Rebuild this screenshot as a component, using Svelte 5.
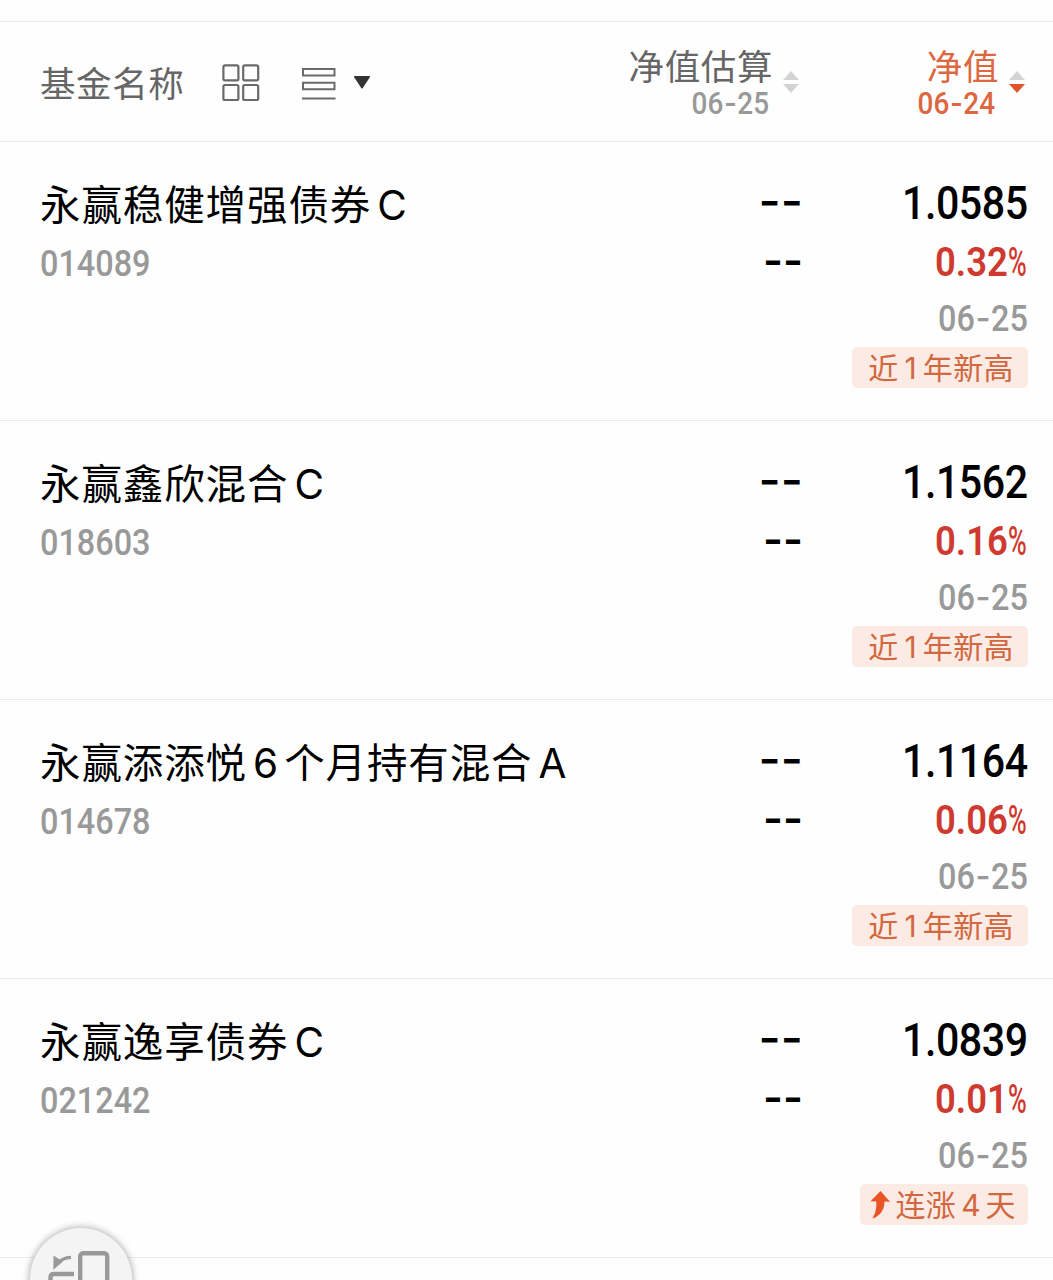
<script lang="ts">
  type Fund = {
    name: string;
    code: string;
    value: string;
    change: string;
    date: string;
    tag: string;
    rising?: boolean;
  };

  const funds: Fund[] = [
    { name: '永赢稳健增强债券C', code: '014089', value: '1.0585', change: '0.32', date: '06-25', tag: '近1年新高' },
    { name: '永赢鑫欣混合C', code: '018603', value: '1.1562', change: '0.16', date: '06-25', tag: '近1年新高' },
    { name: '永赢添添悦6个月持有混合A', code: '014678', value: '1.1164', change: '0.06', date: '06-25', tag: '近1年新高' },
    { name: '永赢逸享债券C', code: '021242', value: '1.0839', change: '0.01', date: '06-25', tag: '连涨4天', rising: true }
  ];

  // split mixed text so latin letters and digits get their own spacing
  function split(text: string) {
    return text.split(/([A-Z0-9]+)/).filter(Boolean);
  }

  function isLatin(part: string) {
    return /^[A-Z0-9]/.test(part);
  }
</script>

{#snippet day(text: string)}
  {@const [month, date] = text.split('-')}
  <span class="num">{month}<span class="hyphen">-</span>{date}</span>
{/snippet}

{#snippet mixed(text: string)}
  {#each split(text) as part}{#if isLatin(part)}<span class="latin">{part}</span>{:else}{part}{/if}{/each}
{/snippet}

{#snippet sorter(active: boolean)}
  <svg class="sorter" width="18" height="24" viewBox="0 0 18 24">
    <path d="M9 1 17 10H1z" fill="#d3d3d3" />
    <path d="M1 14h16L9 23z" fill={active ? '#e2552b' : '#d3d3d3'} />
  </svg>
{/snippet}

<div class="screen">
  <header>
    <div class="title">
      <span class="label">基金名称</span>
      <svg class="grid-icon" width="38" height="38" viewBox="0 0 38 38" fill="none" stroke="#6a6a6a" stroke-width="2.2">
        <rect x="1.4" y="1.4" width="15" height="15" rx="1.6" />
        <rect x="21.2" y="1.4" width="15" height="15" rx="1.6" />
        <rect x="1.4" y="21" width="15" height="15" rx="1.6" />
        <rect x="21.2" y="21" width="15" height="15" rx="1.6" />
      </svg>
      <svg class="list-icon" width="36" height="34" viewBox="0 0 36 34" fill="none" stroke="#6a6a6a" stroke-width="2">
        <path d="M2 2h31.500v6.500H2zM2 15.800h31.500v6.500H2zM1 31.500h33.500" />
      </svg>
      <svg width="18" height="15" viewBox="0 0 18 15">
        <path d="M1.6 1h14.8q1 .2.4 1.2L9.8 13q-.8 1-1.6 0L1.200 2.200Q.6 1.200 1.600 1z" fill="#333" />
      </svg>
    </div>
    <div class="column estimate">
      <div class="heading">
        <span class="label">净值估算</span>
        {@render day('06-25')}
      </div>
      {@render sorter(false)}
    </div>
    <div class="column net active">
      <div class="heading">
        <span class="label">净值</span>
        {@render day('06-24')}
      </div>
      {@render sorter(true)}
    </div>
  </header>

  {#each funds as fund}
    <div class="row">
      <div class="fund">
        <div class="name">{@render mixed(fund.name)}</div>
        <div class="code"><span class="num">{fund.code}</span></div>
      </div>
      <div class="empty">
        <div class="dash">--</div>
        <div class="dash small">--</div>
      </div>
      <div class="values">
        <div class="value"><span class="num">{fund.value}</span></div>
        <div class="change"><span class="num">{fund.change}</span><span class="percent">%</span></div>
        <div class="date">{@render day(fund.date)}</div>
        <div class="tag" class:rising={fund.rising}>
          {#if fund.rising}
            <svg width="20" height="28" viewBox="0 0 20 28">
              <path d="M10.500 0 20 10.800 14.500 10.400C14.400 18 11 24.500 2.300 27.600 5.800 22 6.600 17 6.300 10.400L.5 10.200z" fill="#ea5526" />
            </svg>
          {/if}
          <span class="tag-text">{@render mixed(fund.tag)}</span>
        </div>
      </div>
    </div>
  {/each}

  <div class="float">
    <svg width="66" height="60" viewBox="0 0 66 60" fill="none" stroke="#999" stroke-width="4.4">
      <rect x="32.200" y="4.200" width="27" height="48" rx="3" />
      <path d="M26 25H6q-3.500 0-3.500 3.500v22H26" />
      <path d="M23 8.300Q14 8.500 9.500 15" stroke-width="3.200" />
      <path d="M5.500 6.500 15 12.500 5.300 20.800z" fill="#999" stroke="none" />
    </svg>
  </div>
</div>

<style>
  :global(body) {
    background: #fefefe;
  }

  .screen {
    position: relative;
    box-sizing: border-box;
    width: 1053px;
    height: 1280px;
    padding-top: 21px;
    overflow: hidden;
    background: #fefefe;
    font-family: 'Noto Sans CJK SC', sans-serif;
    color: #000;
  }

  header {
    display: flex;
    box-sizing: border-box;
    height: 121px;
    padding: 1px 27px 0 40px;
    border-top: 1px solid #ebebeb;
    border-bottom: 1px solid #ebebeb;
    color: #666;
  }

  .title {
    display: flex;
    flex: 1;
    align-items: center;
  }

  .label {
    font-size: 35.5px;
    line-height: 38px;
    letter-spacing: 0.6px;
    white-space: nowrap;
  }

  .grid-icon {
    margin: 2px 41px 0 38px;
  }

  .list-icon {
    margin: 4px 16px 0 0;
  }

  .column {
    display: flex;
    justify-content: flex-end;
    align-items: center;
    gap: 9px;
  }

  .net {
    width: 226px;
  }

  .heading {
    display: flex;
    flex-direction: column;
    align-items: flex-end;
    font-size: 31px;
  }

  .heading .num {
    margin: 3px 4px -3px 0;
    line-height: 34px;
    color: #999;
  }

  .active,
  .active .heading .num {
    color: #dc6740;
  }

  .num {
    display: inline-block;
    font-family: Roboto, sans-serif;
    font-weight: 500;
    transform: scaleX(0.9);
    transform-origin: right;
  }

  .hyphen {
    margin: 0 0.02em;
    font-family: Inter, sans-serif;
    line-height: 1px;
  }

  .row {
    display: flex;
    box-sizing: border-box;
    height: 279px;
    padding: 31px 25px 0 40px;
    border-bottom: 1px solid #ebebeb;
  }

  .fund {
    flex: 1;
  }

  .name {
    font-size: 40.5px;
    line-height: 60px;
    letter-spacing: 0.9px;
    white-space: nowrap;
  }

  .latin {
    margin: 0 6px;
    font-family: Inter, sans-serif;
    letter-spacing: 0;
    line-height: 1px;
  }

  .code {
    font: 36px/62px Roboto, sans-serif;
    color: #999;
  }

  .code .num {
    transform-origin: left;
  }

  .empty {
    width: 120px;
    margin: -2px 1px 0 -1px;
    text-align: right;
  }

  .dash {
    font: 500 48px/60px Inter, sans-serif;
    font-variant-ligatures: none;
  }

  .small {
    font-size: 43px;
    font-weight: 600;
    line-height: 58px;
  }

  .values {
    display: flex;
    flex-direction: column;
    align-items: flex-end;
    width: 224px;
    font-family: Roboto, sans-serif;
  }

  .value {
    font-size: 47px;
    line-height: 60px;
  }

  .value .num {
    letter-spacing: -0.5px;
    transform: scaleX(0.875);
  }

  .change {
    display: flex;
    font-size: 41px;
    line-height: 58px;
    color: #cf3a30;
  }

  .change .num {
    font-weight: 600;
    transform: scaleX(0.89);
  }

  .percent {
    width: 20px;
    font-weight: 500;
    transform: scaleX(0.62);
    transform-origin: left;
  }

  .date {
    font-size: 36px;
    line-height: 56px;
    color: #999;
  }

  .tag {
    display: flex;
    align-items: center;
    box-sizing: border-box;
    height: 41px;
    padding: 0 14px 0 16px;
    border-radius: 5px;
    background: #fcebe5;
    font-family: 'Noto Sans CJK SC', sans-serif;
    font-size: 30px;
    letter-spacing: 0.4px;
    color: #d2683f;
    white-space: nowrap;
  }

  .tag-text {
    line-height: 40px;
    padding-bottom: 3px;
  }

  .rising {
    gap: 5px;
    padding: 0 12px 0 10px;
  }

  .rising .latin {
    margin: 0 5px;
  }

  .float {
    position: absolute;
    top: 1228px;
    left: 30px;
    box-sizing: border-box;
    width: 102px;
    height: 102px;
    padding: 21px 18px;
    border-radius: 50%;
    background: #f4f4f4;
    box-shadow: 0 0 7px 1px rgba(0, 0, 0, 0.3);
  }
</style>
